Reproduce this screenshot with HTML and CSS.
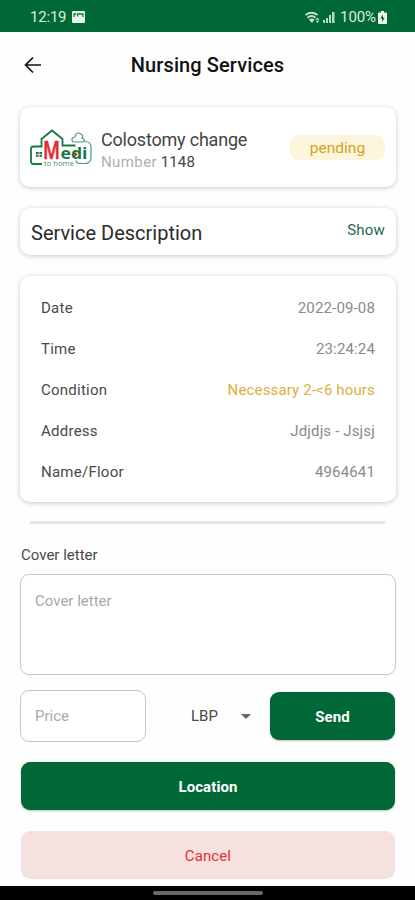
FILE: index.html
```html
<!DOCTYPE html>
<html lang="en">
<head>
    <meta charset="UTF-8">
    <meta name="viewport" content="width=device-width, initial-scale=1.0">
    <title>Nursing Services</title>
    <link rel="stylesheet" href="styles.css">
</head>
<body>
    <div class="status-bar">
        <div class="status-left">
            <span class="clock">12:19</span>
            <svg width="13" height="12" viewBox="0 0 13 12">
                <rect width="13" height="12" rx="1" fill="#e4f3e6"/>
                <path d="M2 6V3h2M5.500 5.500V3H11v3" fill="none" stroke="#1f7548" stroke-width="1.300"/>
            </svg>
        </div>
        <div class="status-right">
            <svg width="16" height="13" viewBox="0 0 16 13">
                <path d="M0.500 4q6-4.500 12 0M2.500 6.700q4-3.500 8 0" fill="none" stroke="#c5e2ca" stroke-width="1.900"/>
                <path d="M7 12L3.800 8.600q3-2 5.700 0zM12.500 6.500l2 2.300h-4zM12.500 12l2-2.300h-4z" fill="#c5e2ca"/>
            </svg>
            <svg class="signal" width="12" height="12" viewBox="0 0 12 12">
                <path d="M0 9h2v3H0zM3 7h2v5H3zM6 4h2v8H6zM9 1h2.500v11H9z" fill="#b9dcc0"/>
            </svg>
            <span class="battery-level">100%</span>
            <svg class="battery" width="9" height="13" viewBox="0 0 9 13">
                <path d="M3 0h3v1.500h2q1 0 1 1V12q0 1-1 1H1q-1 0-1-1V2.500q0-1 1-1h2z" fill="#eef8ef"/>
                <path d="M5 3.500L2.300 7.600h1.900L4 11l2.700-4.200H4.900z" fill="#124b2d"/>
            </svg>
        </div>
    </div>

    <header class="app-bar">
        <svg class="back" width="18" height="18" viewBox="0 0 18 18">
            <path d="M17 9H1.500M9 1.500L1.500 9L9 16.500" fill="none" stroke="#111" stroke-width="1.700"/>
        </svg>
        <h1>Nursing Services</h1>
    </header>

    <main class="content">
        <section class="card service">
            <svg class="logo" width="64" height="42" viewBox="0 0 64 42">
                <path d="M13 38H4.500q-2.500 0-2.500-2.500V23q0-2.500 2.500-2.500h8V13L23 4.500l10.500 8.500v6.500h13" fill="none" stroke="#157a43" stroke-width="1.800"/>
                <path d="M44 16q-3-4 2-5 1-6 6-3 3 2 1 4 3 1 2 4zM56 15.500q6 0 6 6v10q0 6-6 6h-5q-4 0-4-3" fill="none" stroke="#4c9870" stroke-width="1.200"/>
                <path d="M7 26h2.600v2H7zM10.400 26H13v2h-2.600zM7 28.800h2.600v2H7zM10.400 28.800H13v2h-2.600z" fill="#157a43"/>
                <text class="logo-m" x="14" y="33" textLength="17" lengthAdjust="spacingAndGlyphs">M</text>
                <text class="logo-edi" x="31.500" y="33" textLength="27" lengthAdjust="spacingAndGlyphs">edi</text>
                <circle cx="46.500" cy="28.500" r="1.700" fill="#e52a35"/>
                <text class="logo-home" x="15" y="39.500" textLength="30" lengthAdjust="spacingAndGlyphs">to home</text>
            </svg>
            <div class="service-info">
                <div class="service-name">Colostomy change</div>
                <div class="service-number"><span>Number</span> 1148</div>
            </div>
            <span class="badge">pending</span>
        </section>

        <section class="card description">
            <h2>Service Description</h2>
            <a class="show">Show</a>
        </section>

        <section class="card details">
            <div class="row"><span>Date</span><span class="value">2022-09-08</span></div>
            <div class="row"><span>Time</span><span class="value">23:24:24</span></div>
            <div class="row"><span>Condition</span><span class="value warning">Necessary 2-&lt;6 hours</span></div>
            <div class="row"><span>Address</span><span class="value">Jdjdjs - Jsjsj</span></div>
            <div class="row"><span>Name/Floor</span><span class="value">4964641</span></div>
        </section>

        <hr>

        <form class="offer">
            <label for="cover-letter">Cover letter</label>
            <textarea id="cover-letter" placeholder="Cover letter"></textarea>
            <div class="price-row">
                <input type="text" id="price" placeholder="Price">
                <div class="currency">
                    <span>LBP</span>
                    <svg width="10" height="5" viewBox="0 0 10 5"><path d="M0 0h10L5 5z" fill="#666"/></svg>
                </div>
                <button type="button" class="btn send">Send</button>
            </div>
            <button type="button" class="btn location">Location</button>
            <button type="button" class="btn cancel">Cancel</button>
        </form>
    </main>

    <div class="nav-bar"><div class="nav-handle"></div></div>
</body>
</html>
```

FILE: styles.css
```css
* {
    box-sizing: border-box;
}
body {
    display: flex;
    flex-direction: column;
    height: 900px;
    margin: 0;
    overflow: hidden;
    background: #fefefe;
    font-family: Roboto, sans-serif;
    font-size: 15px;
    color: #4a4a4a;
}
svg {
    display: block;
    flex: none;
}
.status-bar {
    display: flex;
    justify-content: space-between;
    align-items: center;
    height: 32px;
    padding: 2px 28px 0 30px;
    background: #006837;
    color: #d9eedc;
}
.status-left, .status-right {
    display: flex;
    align-items: center;
}
.status-left {
    gap: 6px;
}
.clock {
    font-size: 15px;
    letter-spacing: -0.2px;
}
.signal {
    margin-left: 2px;
}
.battery-level {
    margin: 0 2px 0 5px;
    font-size: 15px;
    letter-spacing: -0.1px;
}
.app-bar {
    display: flex;
    align-items: center;
    justify-content: center;
    height: 66px;
}
.back {
    margin-left: 24px;
}
h1 {
    flex: 1;
    margin: 0 42px 0 0;
    text-align: center;
    font-size: 20px;
    font-weight: 500;
    letter-spacing: 0.1px;
    color: #111;
}
.content {
    flex: 1;
    padding: 9px 19px 0 20px;
}
.card {
    display: flex;
    align-items: center;
    border-radius: 10px;
    background: #fff;
    box-shadow: 0 1px 5px rgba(0, 0, 0, 0.22);
}
.service {
    height: 80px;
    padding: 0 11px 0 9px;
}
.service-info {
    flex: 1;
    margin: 6px 0 0 8px;
}
.service-name {
    font-size: 18px;
    line-height: 24px;
    letter-spacing: -0.2px;
    color: #444;
}
.service-number {
    line-height: 20px;
    letter-spacing: 0.1px;
    color: #444;
}
.service-number span {
    color: #b0b0b0;
    letter-spacing: 0.4px;
}
.badge {
    width: 95px;
    height: 25px;
    border-radius: 9px;
    background: #fdf4dc;
    color: #d2a51f;
    text-align: center;
    font-size: 15.5px;
    line-height: 26px;
}
.description {
    justify-content: space-between;
    height: 47px;
    margin-top: 21px;
    padding: 0 11px;
}
h2 {
    margin: 2px 0 0;
    font-size: 20px;
    font-weight: 400;
    color: #2a2a2a;
}
.show {
    margin-top: -3px;
    font-size: 15px;
    letter-spacing: 0.2px;
    color: #1d6847;
}
.details {
    flex-direction: column;
    align-items: stretch;
    height: 226px;
    margin-top: 21px;
    padding: 11px 21px 0;
}
.row {
    display: flex;
    justify-content: space-between;
    align-items: center;
    height: 41px;
    letter-spacing: 0.25px;
}
.value {
    letter-spacing: 0.15px;
    color: #8a8a8a;
}
.value.warning {
    color: #dbb03a;
}
hr {
    height: 3px;
    margin: 19px 11px 0 10px;
    border: 0;
    background: #e4e4e4;
}
.offer {
    display: flex;
    flex-direction: column;
}
label {
    margin: 21px 0 0 1px;
    line-height: 20px;
}
textarea, input {
    border: 1px solid #c8c8c8;
    border-radius: 9px;
    background: #fff;
    font: inherit;
    outline: none;
}
textarea {
    height: 101px;
    margin-top: 9px;
    padding: 17px 14px;
    resize: none;
}
textarea::placeholder, input::placeholder {
    color: #a9a9a9;
}
.price-row {
    display: flex;
    align-items: center;
    margin: 15px 1px 0 0;
}
input {
    width: 126px;
    height: 52px;
    padding: 0 14px;
}
.currency {
    display: flex;
    flex: 1;
    align-items: center;
    justify-content: space-between;
    padding: 0 19px 0 45px;
}
.btn {
    height: 48px;
    margin: 0;
    padding: 1px 0 0;
    border: 0;
    border-radius: 9px;
    background: #006837;
    color: #fff;
    font-family: inherit;
    font-size: 15px;
    font-weight: 700;
    letter-spacing: 0.1px;
    box-shadow: 0 1px 2px rgba(0, 0, 0, 0.25);
}
.send {
    width: 125px;
}
.location {
    margin: 20px 1px 0;
}
.cancel {
    margin: 21px 1px 0;
    background: #f6e1e1;
    color: #e3312d;
    font-weight: 400;
    box-shadow: none;
}
.nav-bar {
    display: flex;
    justify-content: center;
    height: 14px;
    padding-top: 5px;
    background: #000;
}
.nav-handle {
    width: 110px;
    height: 4px;
    border-radius: 2px;
    background: #686868;
}
.logo-m {
    font-family: "Open Sans", sans-serif;
    font-size: 26px;
    font-weight: 600;
    fill: #e52a35;
    stroke: #e52a35;
    stroke-width: 0.7px;
}
.logo-edi {
    font-family: "Open Sans", sans-serif;
    font-size: 16px;
    font-weight: 700;
    fill: #157a43;
}
.logo-home {
    font-family: "Open Sans", sans-serif;
    font-size: 7px;
    fill: #3f9468;
}
```
